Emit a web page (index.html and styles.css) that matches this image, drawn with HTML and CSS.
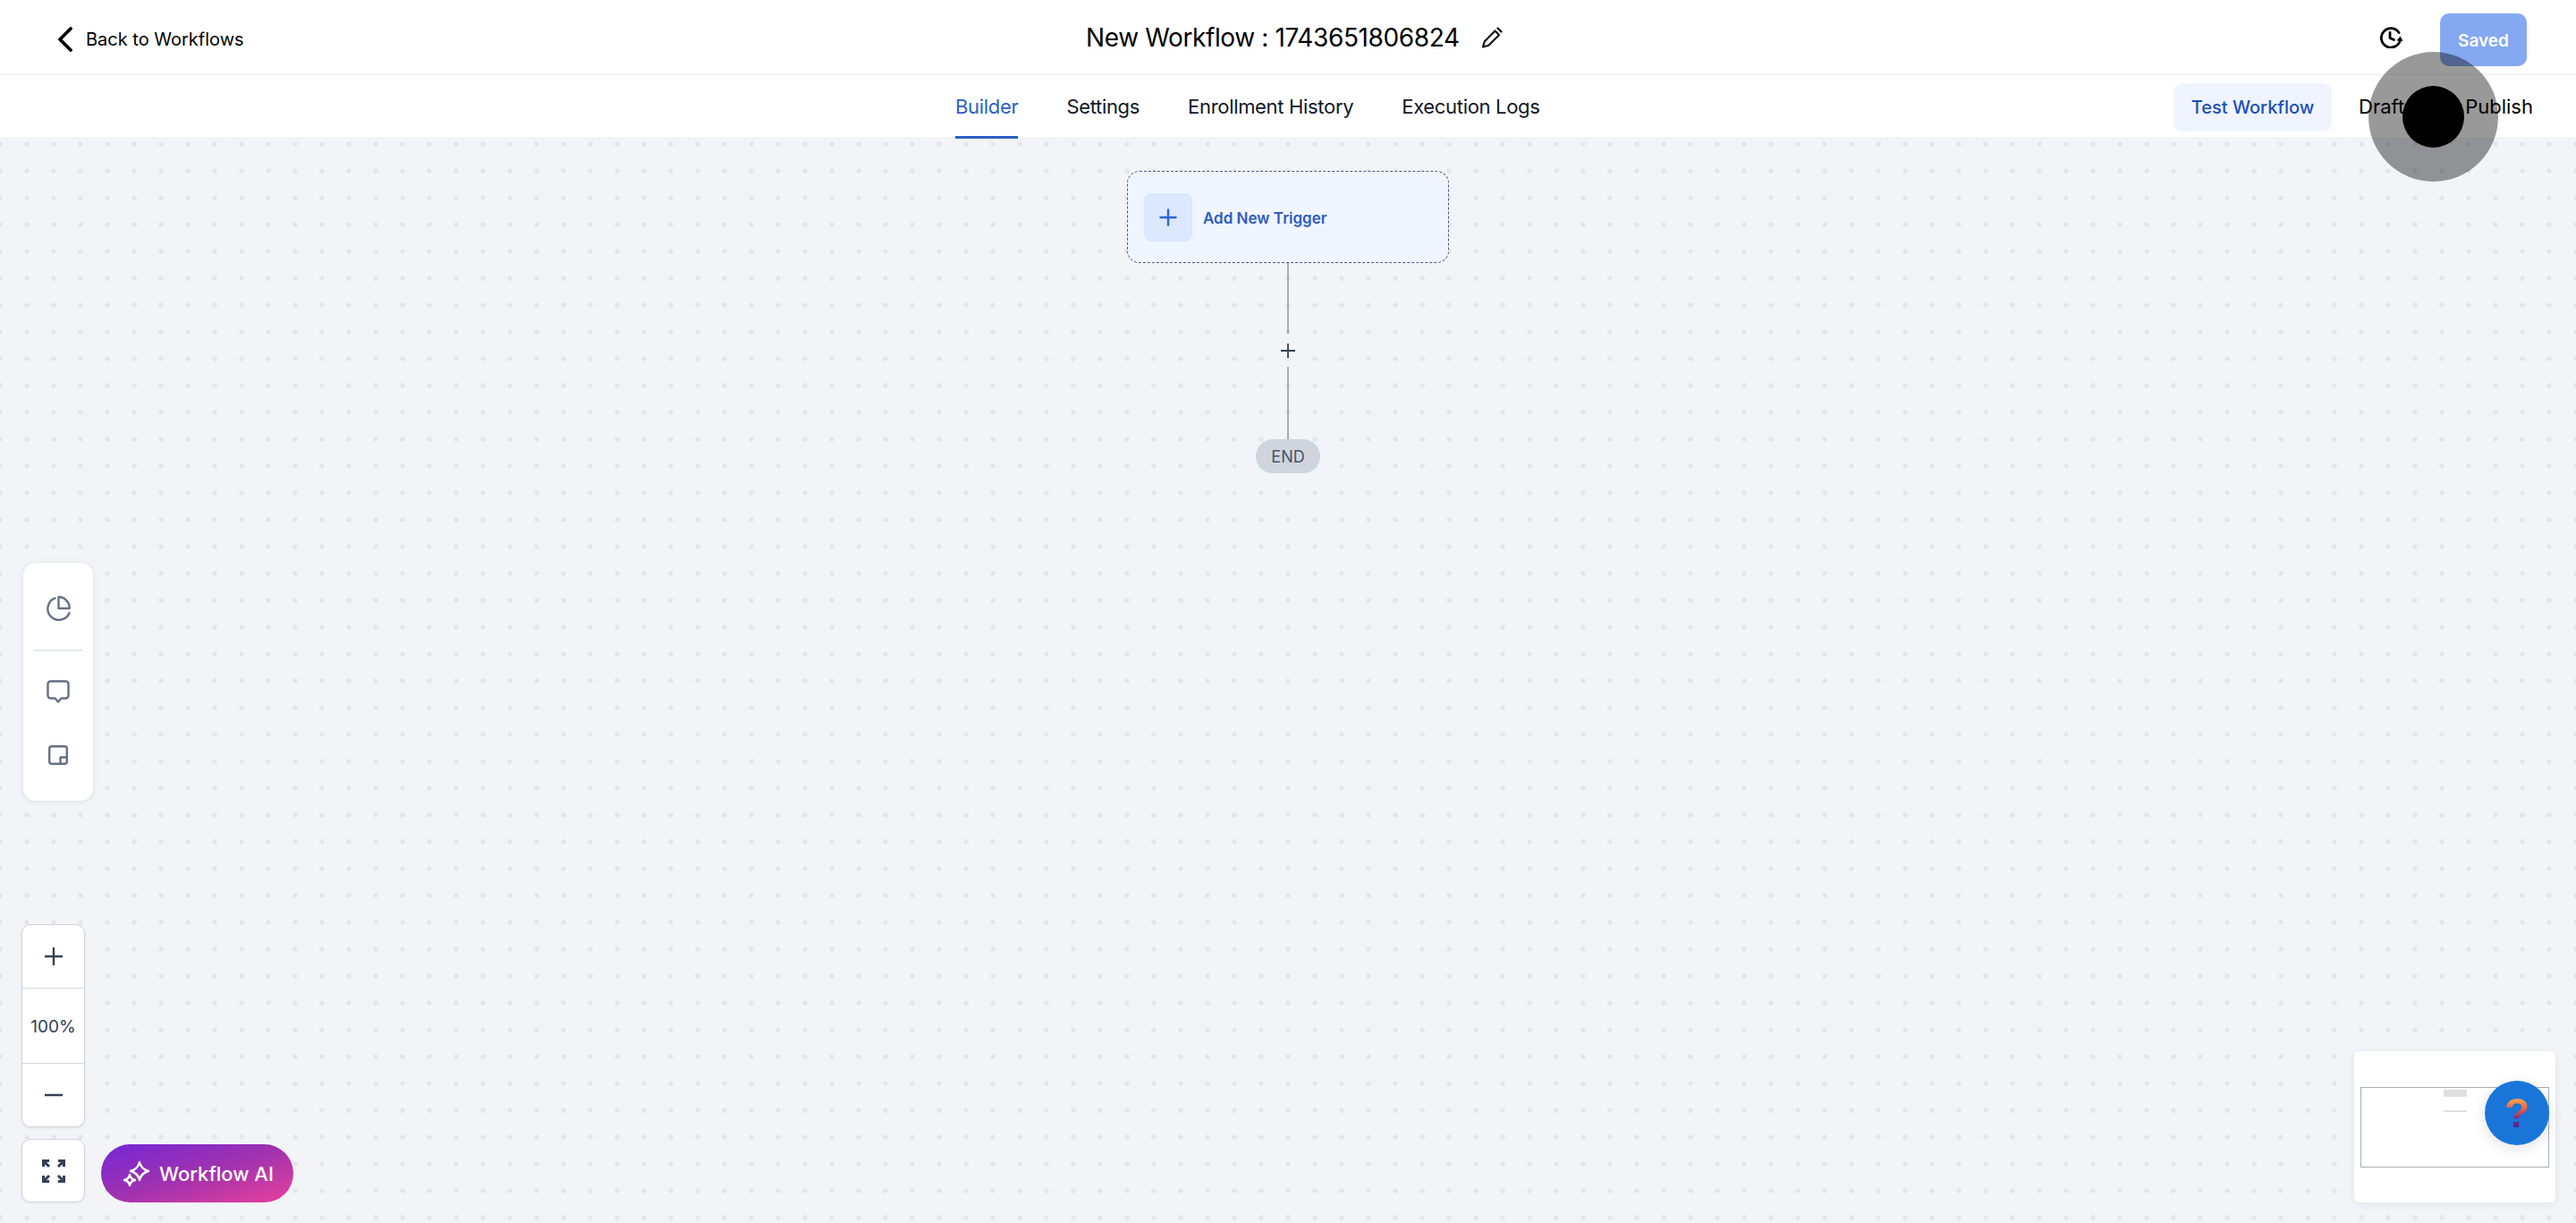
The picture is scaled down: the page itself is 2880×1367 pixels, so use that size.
FILE: index.html
```html
<!DOCTYPE html>
<html lang="en">
<head>
<meta charset="utf-8">
<title>New Workflow</title>
<link rel="stylesheet" href="styles.css">
</head>
<body>
<div class="app">
  <header class="topbar">
    <a class="back">
      <svg class="back-icon" viewBox="0 0 18 28"><path d="M15 2 3 14 15 26"/></svg>
      <span>Back to Workflows</span>
    </a>
    <div class="title">
      <span>New Workflow : 1743651806824</span>
      <svg class="pencil" viewBox="0 0 24 24"><path d="M2 22.500l1.800-6.300L15.500 4.500l4.500 4.500L8.300 20.700z"/><path d="M18.500 1.500l4 4"/></svg>
    </div>
    <div class="top-actions">
      <svg class="history" viewBox="0 0 26 24"><path d="M21 6.500A10.700 10.700 0 1 0 22.400 15"/><path d="M11 6.500v6l4.500 2"/><path class="fill" d="M18.500 15.500l7 .3-3-5.300z"/></svg>
      <button class="saved">Saved</button>
    </div>
  </header>
  <nav class="tabbar">
    <div class="tabs">
      <a class="tab active">Builder</a>
      <a class="tab">Settings</a>
      <a class="tab">Enrollment History</a>
      <a class="tab">Execution Logs</a>
    </div>
    <div class="tab-actions">
      <button class="test">Test Workflow</button>
      <span class="state draft">Draft</span>
      <span class="state publish">Publish</span>
    </div>
  </nav>
  <main class="canvas">
    <div class="flow">
      <div class="trigger">
        <span class="trigger-plus"><svg viewBox="0 0 20 20"><path d="M10 1.500v17M1.500 10h17"/></svg></span>
        <span class="trigger-label">Add New Trigger</span>
      </div>
      <div class="line line-a"></div>
      <svg class="add" viewBox="0 0 16 16"><path d="M8 0v16M0 8h16"/></svg>
      <div class="line line-b"></div>
      <div class="end">END</div>
    </div>

    <aside class="sidepanel">
      <svg class="side-icon pie" viewBox="0 0 28 28"><path d="M10.500 2.700a12.500 12.500 0 1 0 16 16.300"/><path d="M14.500 1.300a12.300 12.300 0 0 1 12.200 12.700H14.500z"/></svg>
      <div class="side-rule"></div>
      <svg class="side-icon comment" viewBox="0 0 26 26"><path d="M4.500 1.500h17a3 3 0 0 1 3 3v13a3 3 0 0 1-3 3h-5L13 24.500 9.500 20.500h-5a3 3 0 0 1-3-3v-13a3 3 0 0 1 3-3z"/></svg>
      <svg class="side-icon note" viewBox="0 0 22 22"><rect x="1.200" y="1.200" width="19.600" height="19.600" rx="2.500"/><path d="M20.800 13.500h-7.300v7.300"/></svg>
    </aside>

    <div class="tools">
      <div class="zoom">
        <div class="zoom-btn plus"><svg viewBox="0 0 20 20"><path d="M10 0v20M0 10h20"/></svg></div>
        <div class="zoom-val">100%</div>
        <div class="zoom-btn minus"><svg viewBox="0 0 20 20"><path d="M0 10h20"/></svg></div>
      </div>
      <div class="tools-row">
        <div class="fit"><svg viewBox="0 0 26 26"><path d="M1.500 8V1.500H8M2 2l6 6M24.500 8V1.500H18M24 2l-6 6M1.500 18v6.500H8M2 24l6-6M24.500 18v6.500H18M24 24l-6-6"/></svg></div>
        <button class="ai">
          <svg viewBox="0 0 30 30"><path d="M19 2Q21 10 29 12 21 14 19 22 17 14 9 12 17 10 19 2z"/><path d="M8 16Q9 21 14 22 9 23 8 28 7 23 2 22 7 21 8 16z"/></svg>
          <span>Workflow AI</span>
        </button>
      </div>
    </div>

    <div class="minimap">
      <div class="viewport">
        <div class="mini-node"></div>
        <div class="mini-line"></div>
      </div>
    </div>
    <div class="help"><span>?</span></div>
  </main>
  <div class="click-ring"><div class="click-dot"></div></div>
</div>
</body>
</html>
```

FILE: styles.css
```css
* { box-sizing: border-box; }
html, body { margin: 0; height: 100%; }
body { font-family: Inter, "Noto Sans", sans-serif; color: #101828; overflow: hidden; }
button { font-family: inherit; border: 0; }
.app { position: relative; width: 2880px; height: 1367px; display: flex; flex-direction: column; background: #fff; }

.topbar { flex: none; height: 84px; border-bottom: 1px solid #eaecf0; display: grid; grid-template-columns: 1150px auto 1fr; align-items: center; padding: 0 55px 0 64px; }
.back { display: flex; align-items: center; gap: 14px; font-size: 20px; color: #000; padding-top: 5px; }
.back-icon { width: 18px; height: 28px; fill: none; stroke: #000; stroke-width: 3.800; stroke-linecap: round; stroke-linejoin: round; }
.title { display: flex; align-items: center; gap: 24px; font-size: 28px; letter-spacing: -.38px; color: #000; }
.pencil { width: 24px; height: 24px; fill: none; stroke: #111; stroke-width: 2.200; stroke-linejoin: round; stroke-linecap: round; }
.top-actions { display: flex; align-items: center; justify-content: flex-end; gap: 41px; }
.history { width: 26px; height: 24px; fill: none; stroke: #000; stroke-width: 2.800; stroke-linecap: round; stroke-linejoin: round; }
.history .fill { fill: #000; stroke: none; }
.saved { width: 97px; height: 59px; margin-top: 6px; padding-top: 3px; border-radius: 10px; background: #84a9f1; color: #fff; font-size: 19px; font-weight: 600; }

.tabbar { flex: none; height: 71px; border-bottom: 1px solid #eaecf0; display: flex; align-items: center; justify-content: space-between; padding: 0 48px 0 1068px; }
.tabs { display: flex; gap: 54px; height: 71px; }
.tab { height: 71px; display: flex; align-items: center; font-size: 22px; letter-spacing: -.32px; color: #101828; font-weight: 400; border-bottom: 3px solid transparent; padding-top: 3px; }
.tab.active { color: #2a5fc4; border-bottom-color: #2a5fc4; }
.tab-actions { display: flex; align-items: center; }
.test { width: 177px; height: 54px; margin: 2px 30px 0 0; border-radius: 10px; background: #eff4ff; color: #1d4fb8; font-size: 20px; font-weight: 500; }
.state { font-size: 22px; color: #000; }
.publish { margin-left: 68px; }

.canvas { position: relative; flex: 1; background-color: #f2f4f8; background-image: radial-gradient(circle, #e3e5ea 2.200px, transparent 3.100px); background-size: 30px 30px; background-position: -15px -9px; }

.flow { display: flex; flex-direction: column; align-items: center; padding-top: 36px; }
.trigger { width: 360px; height: 103px; display: flex; align-items: center; gap: 12px; padding-left: 18px; background: #eff6ff; border: 1.500px dashed #475b85; border-radius: 14px; }
.trigger-plus { width: 54px; height: 54px; border-radius: 8px; background: #dbe8fe; display: flex; align-items: center; justify-content: center; }
.trigger-plus svg { width: 20px; height: 20px; fill: none; stroke: #2c64d4; stroke-width: 2.400; stroke-linecap: round; }
.trigger-label { font-size: 17px; font-weight: 600; color: #2f5cc0; padding-top: 2px; }
.line { width: 2px; background: #aaadb3; }
.line-a { height: 79px; }
.line-b { height: 81px; }
.add { width: 16px; height: 16px; margin: 11px 0 10px; fill: none; stroke: #344054; stroke-width: 1.800; }
.end { width: 72px; height: 38px; border-radius: 19px; background: #d0d5dd; color: #475467; font-size: 18px; display: flex; align-items: center; justify-content: center; }

.sidepanel { position: absolute; left: 26px; top: 474px; width: 78px; height: 266px; background: #fff; border-radius: 14px; box-shadow: 0 1px 6px rgba(16,24,40,.1); display: flex; flex-direction: column; align-items: center; padding-top: 37px; }
.side-icon { fill: none; stroke: #667085; stroke-width: 2.400; stroke-linejoin: round; stroke-linecap: round; }
.pie { width: 28px; height: 28px; }
.side-rule { width: 54px; height: 2px; background: #e4e7ec; margin: 32px 0; }
.comment { width: 26px; height: 26px; }
.note { width: 22px; height: 22px; margin-top: 47px; }

.tools { position: absolute; left: 24px; bottom: 23px; display: flex; flex-direction: column; gap: 13px; }
.zoom { width: 71px; height: 227px; background: #fff; border: 1px solid #d0d5dd; border-radius: 10px; box-shadow: 0 1px 3px rgba(16,24,40,.08); display: flex; flex-direction: column; }
.zoom-btn { display: flex; align-items: center; justify-content: center; }
.zoom-btn svg { width: 20px; height: 20px; fill: none; stroke: #344054; stroke-width: 2.400; stroke-linecap: round; }
.plus { height: 70px; }
.minus { flex: 1; }
.zoom-val { height: 85px; padding-top: 2px; border-top: 1px solid #d0d5dd; border-bottom: 1px solid #d0d5dd; display: flex; align-items: center; justify-content: center; font-size: 19px; color: #344054; }
.tools-row { display: flex; align-items: flex-end; gap: 18px; }
.fit { width: 71px; height: 71px; background: #fff; border: 1px solid #d0d5dd; border-radius: 10px; box-shadow: 0 1px 3px rgba(16,24,40,.08); display: flex; align-items: center; justify-content: center; }
.fit svg { width: 26px; height: 26px; fill: none; stroke: #344054; stroke-width: 3; }
.ai { width: 215px; height: 65px; border-radius: 33px; background: linear-gradient(to bottom right, #7426d6 0%, #a032b0 50%, #e8409a 100%); color: #fff; font-size: 22px; font-weight: 500; display: flex; align-items: center; gap: 11px; padding-left: 24px; }
.ai svg { width: 30px; height: 30px; fill: none; stroke: #fff; stroke-width: 2.400; stroke-linejoin: round; }

.minimap { position: absolute; right: 23px; bottom: 23px; width: 225px; height: 169px; background: #fff; border-radius: 6px; box-shadow: 0 2px 10px rgba(16,24,40,.08); padding: 40px 7px 0 7px; }
.viewport { height: 90px; border: 1px solid #a9adb5; display: flex; flex-direction: column; align-items: center; padding-top: 2px; }
.mini-node { width: 26px; height: 8px; background: #e0e0e0; }
.mini-line { width: 26px; height: 2px; margin-top: 15px; background: #e0e0e0; }

.help { position: absolute; left: 2778px; top: 1053px; width: 72px; height: 72px; border-radius: 50%; background: #1976d8; box-shadow: 0 4px 16px rgba(16,24,40,.12); display: flex; align-items: center; justify-content: center; }
.help span { font-family: "Liberation Sans", sans-serif; font-size: 46px; font-weight: 700; line-height: 1; background: linear-gradient(180deg, #f7a04a 18%, #ea5a48 42%, #7a2a8a 64%, #4a2a90 85%); -webkit-background-clip: text; background-clip: text; color: transparent; }

.click-ring { position: absolute; left: 2648px; top: 58px; width: 145px; height: 145px; border-radius: 50%; background: rgba(0,0,0,.4); display: flex; align-items: center; justify-content: center; }
.click-dot { width: 69px; height: 69px; border-radius: 50%; background: #000; }
```
